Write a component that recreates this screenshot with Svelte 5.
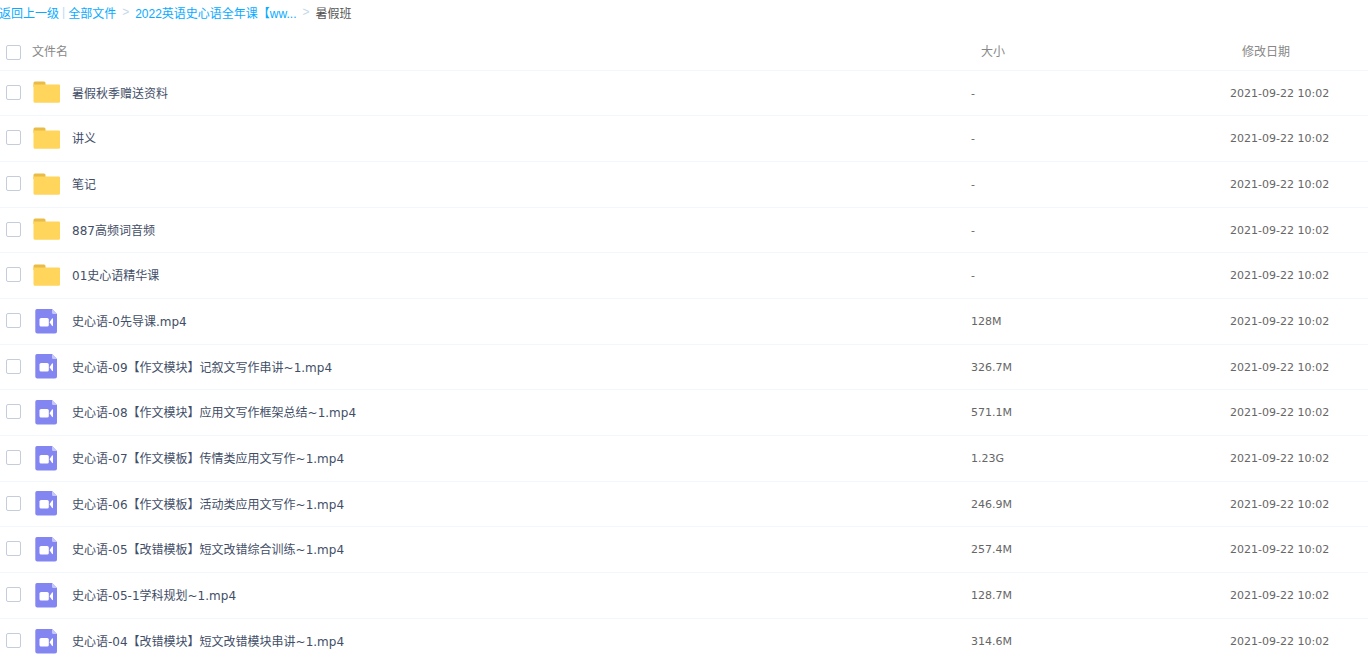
<script lang="ts">
    interface FileItem {
        name: string;
        type: 'folder' | 'video';
        size: string;
        date: string;
    }

    const date = '2021-09-22 10:02';

    const files: FileItem[] = [
        { name: '暑假秋季赠送资料', type: 'folder', size: '-', date },
        { name: '讲义', type: 'folder', size: '-', date },
        { name: '笔记', type: 'folder', size: '-', date },
        { name: '887高频词音频', type: 'folder', size: '-', date },
        { name: '01史心语精华课', type: 'folder', size: '-', date },
        { name: '史心语-0先导课.mp4', type: 'video', size: '128M', date },
        { name: '史心语-09【作文模块】记叙文写作串讲~1.mp4', type: 'video', size: '326.7M', date },
        { name: '史心语-08【作文模块】应用文写作框架总结~1.mp4', type: 'video', size: '571.1M', date },
        { name: '史心语-07【作文模板】传情类应用文写作~1.mp4', type: 'video', size: '1.23G', date },
        { name: '史心语-06【作文模板】活动类应用文写作~1.mp4', type: 'video', size: '246.9M', date },
        { name: '史心语-05【改错模板】短文改错综合训练~1.mp4', type: 'video', size: '257.4M', date },
        { name: '史心语-05-1学科规划~1.mp4', type: 'video', size: '128.7M', date },
        { name: '史心语-04【改错模块】短文改错模块串讲~1.mp4', type: 'video', size: '314.6M', date },
    ];

    let selected: boolean[] = $state(files.map(() => false));
    let allSelected = $derived(selected.every(Boolean));

    function toggleAll() {
        const next = !allSelected;
        selected = files.map(() => next);
    }
</script>

<nav class="crumbs">
    <a href="#back">返回上一级</a>
    <span class="bar">|</span>
    <a href="#all">全部文件</a>
    <span class="arrow">&gt;</span>
    <a href="#course">2022英语史心语全年课【ww...</a>
    <span class="arrow">&gt;</span>
    <span>暑假班</span>
</nav>

<table>
    <thead>
        <tr>
            <th class="check">
                <input type="checkbox" aria-label="全选" checked={allSelected} onchange={toggleAll} />
            </th>
            <th>文件名</th>
            <th class="size">大小</th>
            <th class="date">修改日期</th>
        </tr>
    </thead>
    <tbody>
        {#each files as file, i}
            <tr>
                <td class="check">
                    <input type="checkbox" id="file-{i}" bind:checked={selected[i]} />
                </td>
                <td class="file">
                    <label class="name" for="file-{i}">
                        {#if file.type === 'folder'}
                            <svg width="28" height="28" viewBox="0 0 28 28">
                                <path d="M1.500 5A1.500 1.500 0 0 1 3 3.500h9A1.500 1.500 0 0 1 13.500 5v4h-12z" fill="#e9bb47" />
                                <path d="M1.500 6.500H27a1.200 1.200 0 0 1 1.200 1.200v15.500a1.500 1.500 0 0 1-1.500 1.500H3a1.500 1.500 0 0 1-1.500-1.500z" fill="#ffd55b" />
                            </svg>
                        {:else}
                            <svg width="28" height="28" viewBox="0 0 28 28">
                                <path d="M5 2h15l5 5v17.500a2 2 0 0 1-2 2H5.300a2 2 0 0 1-2-2V3.700A1.700 1.700 0 0 1 5 2z" fill="#8385f0" />
                                <path d="M20 2l5 5h-3.800A1.200 1.200 0 0 1 20 5.800z" fill="#c6c7fa" />
                                <rect x="7.500" y="11" width="9.300" height="8.500" rx="1.600" fill="#fff" />
                                <path d="M17.500 15.200L20 11.600q1-.8 1 .3v6.700q0 1-1 .2z" fill="#fff" />
                            </svg>
                        {/if}
                        <span>{file.name}</span>
                    </label>
                </td>
                <td class="size">{file.size}</td>
                <td class="date">{file.date}</td>
            </tr>
        {/each}
    </tbody>
</table>

<style>
:global(body) {
    margin: 0;
    background-color: #fff;
    font-family: "DejaVu Sans", "Noto Sans CJK SC", sans-serif;
    font-size: 12px;
    color: #424e67;
}

.crumbs {
    display: flex;
    align-items: center;
    box-sizing: border-box;
    height: 26px;
    padding-bottom: 2px;
    margin-left: -1px;
    font-family: "Liberation Sans", "Noto Sans CJK SC", sans-serif;
    color: #555;
    white-space: nowrap;
}

.crumbs a {
    color: #09aaff;
    text-decoration: none;
}

.crumbs .bar {
    margin: 0 3px;
    color: #b8dcf5;
}

.crumbs .arrow {
    margin: 0 6px;
    color: #c4d7e8;
}

table {
    width: 100%;
    table-layout: fixed;
    border-collapse: separate;
    border-spacing: 0;
}

th,
td {
    box-sizing: border-box;
    height: 46px;
    padding: 0;
    border-bottom: 1px solid #f2f6fd;
    text-align: left;
    vertical-align: middle;
}

th {
    height: 45px;
    padding-top: 4px;
    font-weight: normal;
    color: #888;
}

th.check {
    padding-top: 8px;
}

tbody tr:nth-child(3n + 1) td {
    height: 45px;
}

tbody tr:last-child td {
    border-bottom: none;
}

td.check,
td.file {
    padding-bottom: 2px;
}

.check {
    width: 32px;
    padding-left: 6px;
}

th.size {
    width: 259px;
    padding-left: 10px;
}

th.date {
    width: 138px;
    padding-left: 12px;
}

td.size,
td.date {
    font-size: 11px;
    color: #666;
}

input {
    display: block;
    appearance: none;
    box-sizing: border-box;
    width: 15px;
    height: 15px;
    margin: 0;
    border: 1px solid #c3cddb;
    border-radius: 2px;
    background-color: #fff;
}

input:checked {
    background-color: #09aaff;
    border-color: #09aaff;
}

.name {
    display: flex;
    align-items: center;
    gap: 12px;
    white-space: nowrap;
}
</style>
